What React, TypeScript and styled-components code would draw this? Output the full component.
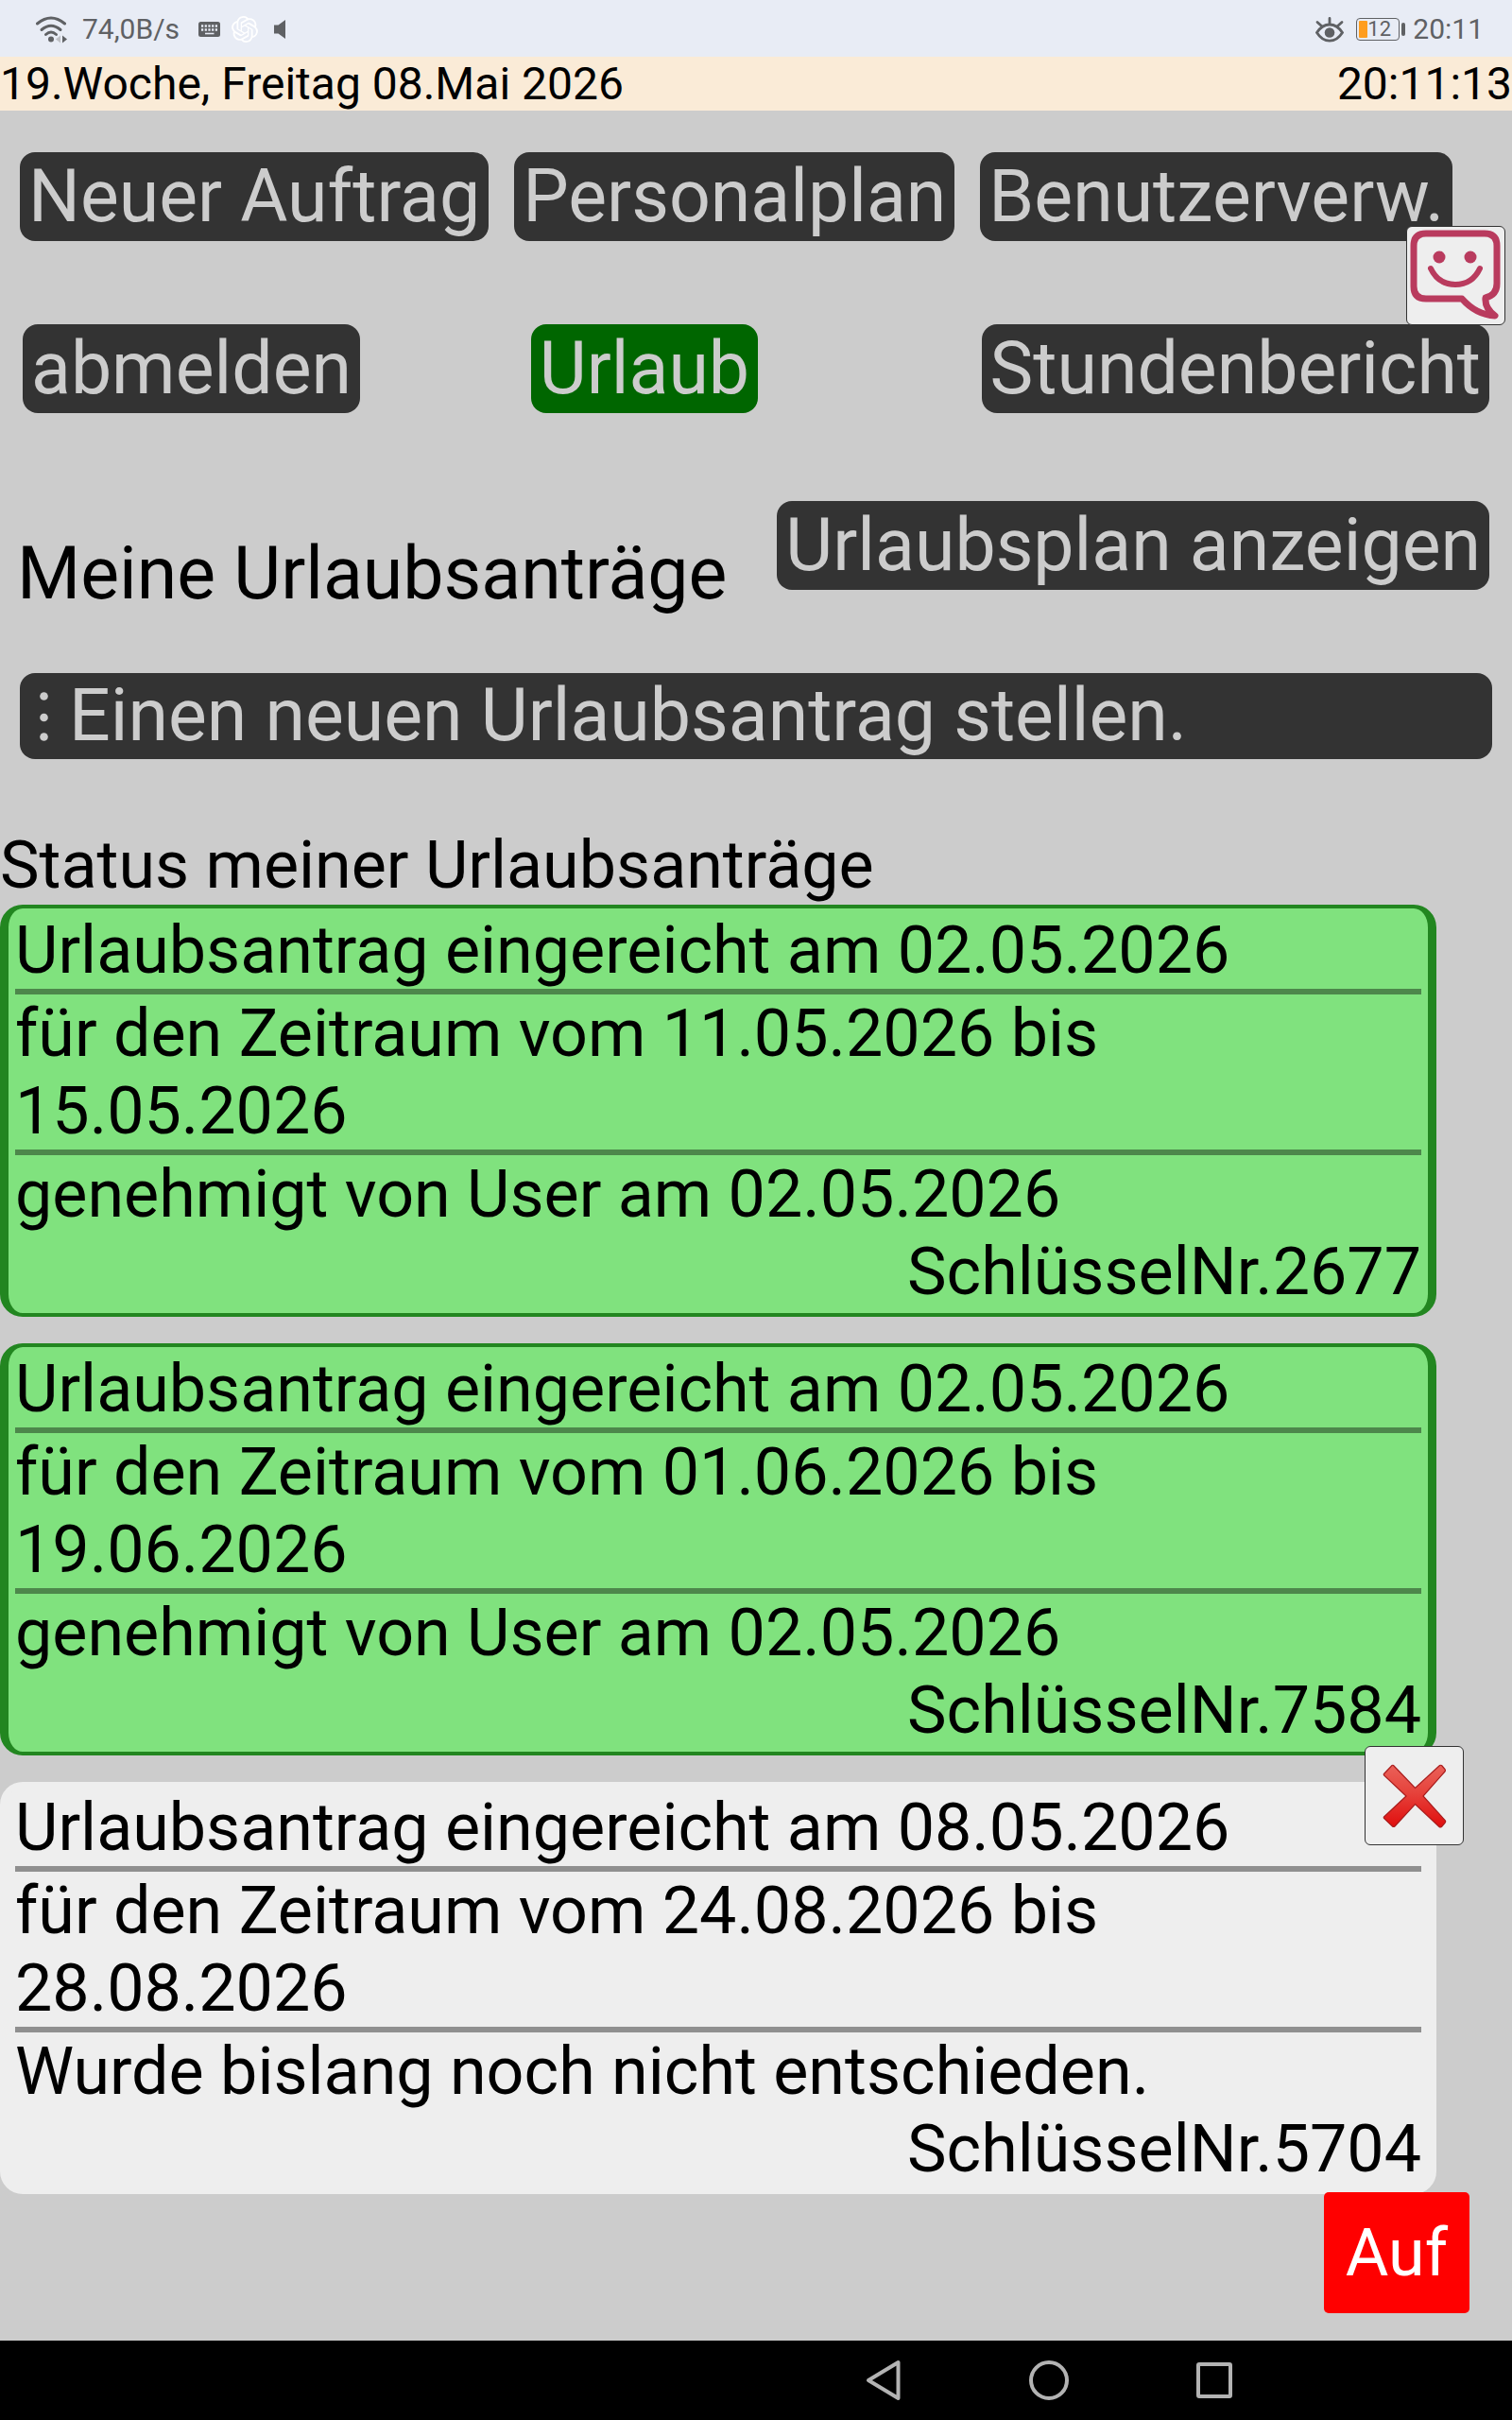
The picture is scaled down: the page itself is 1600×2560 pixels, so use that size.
import React from 'react';
import styled, { createGlobalStyle } from 'styled-components';
import { SiOpenai } from 'react-icons/si';

const GlobalStyle = createGlobalStyle`
  *, *::before, *::after { box-sizing: border-box; }
  body {
    margin: 0;
    background: #cccccc;
    color: #000;
    font-family: Roboto, "Liberation Sans", sans-serif;
  }
  button { font-family: inherit; cursor: pointer; }
`;

const Screen = styled.div`
  position: relative;
  min-height: 100vh;
  display: flex;
  flex-direction: column;
`;

const StatusBar = styled.header`
  display: flex;
  justify-content: space-between;
  align-items: center;
  height: 60px;
  padding: 2px 30px 0 36px;
  background: #e8ecf5;
  color: #5f6164;
  font-size: 30px;
  line-height: 34px;
`;

const StatusGroup = styled.div<{ $gap: number }>`
  display: flex;
  align-items: center;
  gap: ${(p) => p.$gap}px;
  svg { display: block; }
`;

const Battery = styled.span`
  display: flex;
  align-items: center;
  gap: 2px;
  &::after {
    content: "";
    width: 4px;
    height: 14px;
    border-radius: 2px;
    background: #5f6164;
  }
`;

const BatteryBody = styled.span`
  display: flex;
  align-items: center;
  width: 46px;
  height: 24px;
  padding: 0 2px;
  border: 1px solid #5f6164;
  border-radius: 4px;
  font-size: 22px;
  line-height: 22px;
`;

const BatteryLevel = styled.span`
  width: 9px;
  height: 18px;
  border-radius: 1px;
  background: #ff9d1e;
`;

const DateBar = styled.div`
  display: flex;
  justify-content: space-between;
  background: #faebd7;
  font-size: 48px;
  line-height: 57px;
`;

const Main = styled.main`
  flex: 1;
  padding: 44px 0 120px;
`;

const Menu = styled.nav`
  display: flex;
  flex-direction: column;
  gap: 88px;
`;

const MenuRow = styled.div`
  display: flex;
  gap: 27px;
  padding: 0 21px;
`;

const SpreadRow = styled.div`
  display: grid;
  grid-template-columns: 41fr auto 59fr;
  padding: 0 24px;
  & > :first-child { justify-self: start; }
  & > :last-child { justify-self: end; }
`;

const MenuButton = styled.button<{ $active?: boolean }>`
  padding: 1px 9px;
  border: 0;
  border-radius: 16px;
  background: ${(p) => (p.$active ? '#006600' : '#333333')};
  color: #cccccc;
  font-size: 77px;
  line-height: 92px;
  white-space: nowrap;
`;

const TitleRow = styled.div`
  display: flex;
  justify-content: space-between;
  align-items: flex-start;
  margin-top: 93px;
  padding: 0 24px 0 18px;
`;

const Title = styled.h1`
  margin: 0;
  padding-top: 31px;
  font-size: 77px;
  font-weight: 400;
  line-height: 92px;
`;

const NewRequest = styled.button`
  display: flex;
  align-items: center;
  gap: 22px;
  width: calc(100% - 42px);
  margin: 59px 21px 0;
  padding: 0 21px;
  border: 0;
  border-radius: 16px;
  background: #333333;
  color: #cccccc;
  font-size: 77px;
  line-height: 91px;
  text-align: left;
`;

const ListTitle = styled.h2`
  margin: 71px 0 1px;
  font-size: 70px;
  font-weight: 400;
  line-height: 82px;
`;

const RequestList = styled.div`
  display: flex;
  flex-direction: column;
  gap: 28px;
  margin-right: 80px;
`;

const Card = styled.article<{ $approved: boolean }>`
  position: relative;
  padding: 3px 7px;
  border: solid ${(p) => (p.$approved ? '#228620' : '#eeeeee')};
  border-width: 4px 9px;
  border-radius: 24px;
  background: ${(p) => (p.$approved ? '#80e27e' : '#eeeeee')};
  font-size: 70px;
  line-height: 82px;
`;

const CardLine = styled.p<{ $divided?: boolean }>`
  margin: 0;
  border-bottom: ${(p) => (p.$divided ? '6px solid rgba(0, 0, 0, 0.4)' : '0')};
`;

const KeyLine = styled(CardLine)`
  text-align: right;
`;

const IconButton = styled.button`
  position: absolute;
  display: grid;
  place-items: center;
  width: 105px;
  height: 105px;
  padding: 0;
  border: 1px solid #333333;
  border-radius: 6px;
  background: #eeeeee;
`;

const ChatButton = styled(IconButton)`
  top: 239px;
  right: 7px;
`;

const DeleteButton = styled(IconButton)`
  top: -42px;
  right: -38px;
`;

const UpButton = styled.button`
  position: absolute;
  right: 45px;
  bottom: 113px;
  padding: 23px;
  border: 0;
  border-radius: 5px;
  background: #ff0000;
  color: #ffffff;
  font-size: 70px;
  line-height: 82px;
`;

const SystemBar = styled.footer`
  display: flex;
  justify-content: center;
  gap: 133px;
  height: 84px;
  padding-left: 620px;
  background: #000;
`;

const SystemButton = styled.button`
  display: grid;
  place-items: center;
  width: 42px;
  padding: 0;
  border: 0;
  background: none;
`;

const WifiIcon = () => (
  <svg width="36" height="30" viewBox="0 0 36 30" fill="none" stroke="#5f6164" strokeWidth="3" strokeLinecap="round">
    <path d="M3.500 9Q18 -3 32.500 9" />
    <path d="M8 15.500Q18 7 28 15.500" />
    <path d="M12.500 20.500Q18 15.500 23.500 20.500" />
    <circle cx="18" cy="25.500" r="3" fill="#5f6164" stroke="none" />
    <path d="M28 21.500v8l-5-4z" fill="#bfc1c6" stroke="none" />
    <path d="M30 21.500v8l5-4z" fill="#5f6164" stroke="none" />
  </svg>
);

const KeyboardIcon = () => (
  <svg width="23" height="16" viewBox="0 0 23 16">
    <rect width="23" height="16" rx="2.500" fill="#5f6164" />
    <path d="M3 4.500h17M3 8.500h17" stroke="#e8ecf5" strokeWidth="2.500" strokeDasharray="2.200 1.500" />
    <path d="M7 12.500h9.500" stroke="#e8ecf5" strokeWidth="1.600" />
  </svg>
);

const SpeakerIcon = () => (
  <svg width="12" height="20" viewBox="0 0 12 20" fill="#5f6164">
    <path d="M0 5.500h4.500L12 0v20l-7.500-5.500H0z" />
  </svg>
);

const EyeIcon = () => (
  <svg width="30" height="27" viewBox="0 0 30 27" fill="none" stroke="#5f6164" strokeWidth="2.800" strokeLinecap="round">
    <path d="M1.500 16.500Q7 8 15 8t13.500 8.500Q23 25.200 15 25.200T1.500 16.500z" />
    <path d="M15 7V1.500M6.500 9.500L2 5.500M23.500 9.500L28 5.500" />
    <circle cx="15" cy="16.500" r="5.300" fill="#5f6164" stroke="none" />
  </svg>
);

const ChatIcon = () => (
  <svg width="97" height="97" viewBox="0 0 97 97" fill="none" stroke="#b93b5e" strokeWidth="7" strokeLinejoin="round">
    <path d="M17 4H79Q92 4 92 17V57Q92 69 80 72Q79 83 90 91Q70 90 55 73H17Q4 73 4 60V17Q4 4 17 4Z" />
    <path d="M22 41Q30 58 48 58T74 41" strokeWidth="6" strokeLinecap="round" />
    <circle cx="31" cy="29" r="6.500" fill="#b93b5e" stroke="none" />
    <circle cx="64" cy="29" r="6.500" fill="#b93b5e" stroke="none" />
  </svg>
);

const CrossIcon = () => (
  <svg width="68" height="68" viewBox="0 0 68 68">
    <defs>
      <linearGradient id="crossFill" x1="0" y1="0" x2="0" y2="1">
        <stop offset="0" stopColor="#ea6159" />
        <stop offset="0.45" stopColor="#e6423b" />
        <stop offset="1" stopColor="#e00d0d" />
      </linearGradient>
    </defs>
    <path
      d="M11.500 1.500L34.500 25.500L60.500 1.500Q62 .8 63 2L66 5.500Q66.800 7 66 8L43 34L66.500 60Q67 61 66 62.500L62.500 66.500Q61 67.500 60 66.500L34.500 42.500L13 66Q11.500 67 10.500 66L1.500 57.500Q1 56.500 1.500 56L25 34L1.500 12Q1 11 1.500 10.500L10 1.500Q11 1 11.500 1.500Z"
      fill="url(#crossFill)"
      stroke="#a81c1c"
      strokeWidth="1.200"
    />
  </svg>
);

interface Request {
  submitted: string;
  from: string;
  to: string;
  decision: string;
  approved: boolean;
  key: string;
}

const requests: Request[] = [
  { submitted: '02.05.2026', from: '11.05.2026', to: '15.05.2026', decision: 'genehmigt von User am 02.05.2026', approved: true, key: '2677' },
  { submitted: '02.05.2026', from: '01.06.2026', to: '19.06.2026', decision: 'genehmigt von User am 02.05.2026', approved: true, key: '7584' },
  { submitted: '08.05.2026', from: '24.08.2026', to: '28.08.2026', decision: 'Wurde bislang noch nicht entschieden.', approved: false, key: '5704' },
];

const RequestCard = ({ request }: { request: Request }) => (
  <Card $approved={request.approved}>
    <CardLine $divided>Urlaubsantrag eingereicht am {request.submitted}</CardLine>
    <CardLine $divided>
      für den Zeitraum vom {request.from} bis {request.to}
    </CardLine>
    <CardLine>{request.decision}</CardLine>
    <KeyLine>SchlüsselNr.{request.key}</KeyLine>
    {!request.approved && (
      <DeleteButton type="button" aria-label="Antrag löschen">
        <CrossIcon />
      </DeleteButton>
    )}
  </Card>
);

export default function App() {
  return (
    <Screen>
      <GlobalStyle />
      <StatusBar>
        <StatusGroup $gap={20}>
          <StatusGroup $gap={15}>
            <WifiIcon />
            <span>74,0B/s</span>
          </StatusGroup>
          <StatusGroup $gap={17}>
            <StatusGroup $gap={12}>
              <KeyboardIcon />
              <SiOpenai size={28} color="#ffffff" />
            </StatusGroup>
            <SpeakerIcon />
          </StatusGroup>
        </StatusGroup>
        <StatusGroup $gap={13}>
          <EyeIcon />
          <StatusGroup $gap={8}>
            <Battery>
              <BatteryBody>
                <BatteryLevel />
                12
              </BatteryBody>
            </Battery>
            <span>20:11</span>
          </StatusGroup>
        </StatusGroup>
      </StatusBar>
      <DateBar>
        <span>19.Woche, Freitag 08.Mai 2026</span>
        <time>20:11:13</time>
      </DateBar>
      <Main>
        <Menu>
          <MenuRow>
            <MenuButton type="button">Neuer Auftrag</MenuButton>
            <MenuButton type="button">Personalplan</MenuButton>
            <MenuButton type="button">Benutzerverw.</MenuButton>
          </MenuRow>
          <SpreadRow>
            <MenuButton type="button">abmelden</MenuButton>
            <MenuButton type="button" $active>Urlaub</MenuButton>
            <MenuButton type="button">Stundenbericht</MenuButton>
          </SpreadRow>
        </Menu>
        <TitleRow>
          <Title>Meine Urlaubsanträge</Title>
          <MenuButton type="button">Urlaubsplan anzeigen</MenuButton>
        </TitleRow>
        <NewRequest type="button">
          <svg width="9" height="52" viewBox="0 0 9 52" fill="#cccccc" aria-hidden="true">
            <circle cx="4.500" cy="4.500" r="4.300" />
            <circle cx="4.500" cy="27" r="4.300" />
            <circle cx="4.500" cy="47.500" r="4.300" />
          </svg>
          Einen neuen Urlaubsantrag stellen.
        </NewRequest>
        <ListTitle>Status meiner Urlaubsanträge</ListTitle>
        <RequestList>
          {requests.map((request) => (
            <RequestCard key={request.key} request={request} />
          ))}
        </RequestList>
      </Main>
      <ChatButton type="button" aria-label="Chat öffnen">
        <ChatIcon />
      </ChatButton>
      <UpButton type="button">Auf</UpButton>
      <SystemBar>
        <SystemButton type="button" aria-label="Zurück">
          <svg width="42" height="46" viewBox="0 0 42 46" fill="none" stroke="#b3b3b3" strokeWidth="4" strokeLinejoin="round">
            <path d="M36.500 4v38L5 23z" />
          </svg>
        </SystemButton>
        <SystemButton type="button" aria-label="Startbildschirm">
          <svg width="42" height="42" viewBox="0 0 42 42" fill="none" stroke="#b3b3b3" strokeWidth="4">
            <circle cx="21" cy="21" r="19" />
          </svg>
        </SystemButton>
        <SystemButton type="button" aria-label="Letzte Apps">
          <svg width="38" height="38" viewBox="0 0 38 38" fill="none" stroke="#b3b3b3" strokeWidth="4" strokeLinejoin="round">
            <rect x="2" y="2" width="34" height="34" rx="1" />
          </svg>
        </SystemButton>
      </SystemBar>
    </Screen>
  );
}
